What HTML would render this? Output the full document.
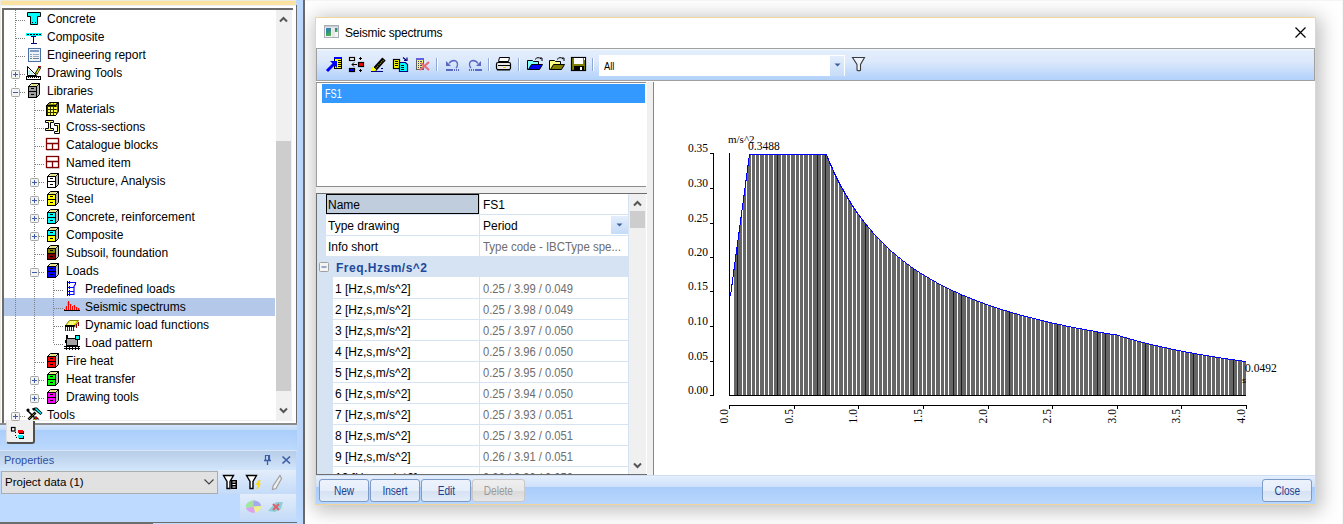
<!DOCTYPE html><html><head><meta charset="utf-8"><style>
html,body{margin:0;padding:0;}
body{width:1343px;height:524px;overflow:hidden;position:relative;background:#fff;font-family:"Liberation Sans",sans-serif;font-size:12px;color:#000;}
div{box-sizing:border-box;}
svg{position:absolute;overflow:visible;}
</style></head><body>
<div style="position:absolute;left:0px;top:0px;width:303px;height:524px;background:#bfdaff"></div>
<div style="position:absolute;left:0px;top:425px;width:297px;height:5px;background:linear-gradient(#d3e5fb,#c3dbfa)"></div>
<div style="position:absolute;left:0px;top:430px;width:297px;height:20px;background:linear-gradient(#aacefb,#bdd9fd)"></div>
<div style="position:absolute;left:0px;top:450px;width:297px;height:1px;background:#d9e7f6"></div>
<div style="position:absolute;left:0px;top:0px;width:296px;height:1px;background:#efe9da"></div>
<div style="position:absolute;left:1px;top:1px;width:295px;height:4px;background:#fce2a0"></div>
<div style="position:absolute;left:0px;top:5px;width:297px;height:420px;background:#fff"></div>
<div style="position:absolute;left:0px;top:0px;width:1px;height:422px;background:#efece6"></div>
<div style="position:absolute;left:0px;top:5px;width:296px;height:1px;background:#eef0f4"></div>
<div style="position:absolute;left:2px;top:8px;width:291px;height:2px;background:#6c6c6c"></div>
<div style="position:absolute;left:2px;top:8px;width:2px;height:416px;background:#6c6c6c"></div>
<div style="position:absolute;left:296px;top:5px;width:1px;height:420px;background:#6c6c6c"></div>
<div style="position:absolute;left:0px;top:423px;width:297px;height:2px;background:#8c8c8c"></div>
<div style="position:absolute;left:4px;top:420px;width:289px;height:1px;background:#eeeeee"></div>
<div style="position:absolute;left:276px;top:10px;width:16px;height:410px;background:#f0f0f0"></div>
<div style="position:absolute;left:276px;top:141px;width:15px;height:250px;background:#cdcdcd"></div>
<svg style="left:279px;top:16px" width="9" height="7"><path d="M1 5.5 L4.5 2 L8 5.5" fill="none" stroke="#555" stroke-width="2"/></svg>
<svg style="left:279px;top:407px" width="9" height="7"><path d="M1 1.5 L4.5 5 L8 1.5" fill="none" stroke="#555" stroke-width="2"/></svg>
<div style="position:absolute;left:303px;top:0px;width:2px;height:524px;background:#6b6b6b"></div>
<div style="position:absolute;left:0px;top:522px;width:297px;height:1px;background:#6d6d6d"></div>
<div style="position:absolute;left:0px;top:523px;width:153px;height:1px;background:#6d6d6d"></div>
<div style="position:absolute;left:4px;top:10px;width:272px;height:410px;overflow:hidden">
<div style="position:absolute;left:0px;top:288px;width:271px;height:18px;background:#b4c9e9"></div>
<div style="position:absolute;left:43px;top:0px;height:18px;line-height:18px;white-space:nowrap;">Concrete</div>
<svg style="left:22px;top:1px" width="16" height="16"><path d="M1.5 1.5H14.5V5.5H11.5V13.5H4.5V5.5H1.5Z" fill="#00ffff" stroke="#000"/><rect x="6" y="11" width="1" height="1" fill="#000"/><rect x="9" y="11" width="1" height="1" fill="#000"/></svg>
<div style="position:absolute;left:43px;top:18px;height:18px;line-height:18px;white-space:nowrap;">Composite</div>
<svg style="left:22px;top:19px" width="16" height="16"><rect x="0" y="4" width="16" height="3" fill="#00ffff"/><path d="M1 5.5h14" stroke="#000" stroke-dasharray="2 1"/><rect x="5" y="7" width="5" height="1" fill="#000080"/><rect x="7" y="8" width="1" height="6" fill="#000080"/><rect x="5" y="14" width="6" height="1" fill="#000080"/></svg>
<div style="position:absolute;left:43px;top:36px;height:18px;line-height:18px;white-space:nowrap;">Engineering report</div>
<svg style="left:22px;top:37px" width="16" height="16"><rect x="2.5" y="1.5" width="12" height="13" fill="#eef2f9" stroke="#4a6fa5"/><rect x="4" y="3" width="9" height="2" fill="#7f9cc8"/><rect x="4" y="7" width="2" height="1" fill="#8a9ab0"/><rect x="7" y="7" width="6" height="1" fill="#9aa8bc"/><rect x="4" y="9" width="2" height="1" fill="#8a9ab0"/><rect x="7" y="9" width="6" height="1" fill="#9aa8bc"/><rect x="4" y="11" width="2" height="1" fill="#707f96"/><rect x="7" y="11" width="6" height="1" fill="#707f96"/></svg>
<div style="position:absolute;left:43px;top:54px;height:18px;line-height:18px;white-space:nowrap;">Drawing Tools</div>
<svg style="left:22px;top:55px" width="16" height="16"><path d="M1.5 1.5V10.5H10.5Z" fill="#fff" stroke="#000"/><path d="M3 5.5V9H6.5Z" fill="none" stroke="#00e0e0" stroke-dasharray="1 1"/><rect x="0.5" y="11.5" width="14" height="3" fill="#fff" stroke="#000"/><path d="M2 12.5h1M4 12.5h1M6 12.5h1M8 12.5h1M10 12.5h1M12 12.5h1" stroke="#000"/><path d="M10 9L14 2" stroke="#000" stroke-width="2.6"/><path d="M10.5 8.5L13.5 3" stroke="#ffff00" stroke-width="1.2"/><rect x="12" y="1" width="3" height="1" fill="#c00000"/></svg>
<div style="position:absolute;left:43px;top:72px;height:18px;line-height:18px;white-space:nowrap;">Libraries</div>
<svg style="left:22px;top:73px" width="16" height="16"><path d="M10.5 3.5L13.5 0.5V11.5L10.5 14.5Z" fill="#b8b8b8" stroke="#000"/><path d="M2.5 3.5L5.5 0.5H13.5L10.5 3.5Z" fill="#f8f8e0" stroke="#000"/><path d="M5 2.5l1-1 1 1 1-1 1 1 1-1 1 1" stroke="#c8c000" fill="none" stroke-width="0.9"/><rect x="2.5" y="3.5" width="8" height="5" fill="#a0a0a0" stroke="#000"/><rect x="2.5" y="8.5" width="8" height="6" fill="#a0a0a0" stroke="#000"/><rect x="5" y="5" width="3" height="1" fill="#000"/><rect x="5" y="11" width="3" height="1" fill="#000"/></svg>
<div style="position:absolute;left:62px;top:90px;height:18px;line-height:18px;white-space:nowrap;">Materials</div>
<svg style="left:41px;top:91px" width="16" height="16"><path d="M10.5 4.5L13.5 1.5V10.5L10.5 14.5Z" fill="#606000" stroke="#000"/><path d="M1.5 4.5L4.5 1.5H13.5L10.5 4.5Z" fill="#808000" stroke="#000"/><rect x="1.5" y="4.5" width="9" height="10" fill="#303000" stroke="#000"/><rect x="3" y="6" width="2" height="2" fill="#ffff40"/><rect x="6" y="6" width="2" height="2" fill="#ffff40"/><rect x="9" y="6" width="2" height="2" fill="#ffff40"/><rect x="3" y="9" width="2" height="2" fill="#ffff40"/><rect x="6" y="9" width="2" height="2" fill="#ffff40"/><rect x="9" y="9" width="2" height="2" fill="#ffff40"/><rect x="3" y="12" width="2" height="2" fill="#ffff40"/><rect x="6" y="12" width="2" height="2" fill="#ffff40"/><rect x="9" y="12" width="2" height="2" fill="#ffff40"/><rect x="6" y="2" width="2" height="1" fill="#ffff40"/><rect x="9" y="2" width="2" height="1" fill="#ffff40"/><rect x="11" y="6" width="1" height="2" fill="#ffff40"/><rect x="11" y="9" width="1" height="2" fill="#ffff40"/></svg>
<div style="position:absolute;left:62px;top:108px;height:18px;line-height:18px;white-space:nowrap;">Cross-sections</div>
<svg style="left:41px;top:109px" width="16" height="16"><path d="M0.5 1.5H8.5V3.5H5.5V9.5H8.5V11.5H0.5V9.5H3.5V3.5H0.5Z" fill="#fff" stroke="#000"/><rect x="2" y="2" width="5" height="1" fill="#ffff60"/><rect x="4" y="4" width="1" height="5" fill="#ffff60"/><rect x="2" y="10" width="5" height="1" fill="#ffff60"/><path d="M9.5 4.5H14.5V14.5H9.5V12.5H12.5V6.5H9.5Z" fill="#fff" stroke="#000"/><rect x="13" y="6" width="1" height="7" fill="#ffff60"/></svg>
<div style="position:absolute;left:62px;top:126px;height:18px;line-height:18px;white-space:nowrap;">Catalogue blocks</div>
<svg style="left:41px;top:127px" width="16" height="16"><rect x="2" y="2" width="13" height="12" fill="#c8c8c8" opacity="0.6"/><rect x="1.5" y="1.5" width="12" height="11" fill="#fff" stroke="#800000" stroke-width="1.3"/><path d="M1.5 6.5h12M7.5 6.5v6" stroke="#800000" stroke-width="1.3"/></svg>
<div style="position:absolute;left:62px;top:144px;height:18px;line-height:18px;white-space:nowrap;">Named item</div>
<svg style="left:41px;top:145px" width="16" height="16"><rect x="2" y="2" width="13" height="12" fill="#c8c8c8" opacity="0.6"/><rect x="1.5" y="1.5" width="12" height="11" fill="#fff" stroke="#800000" stroke-width="1.3"/><path d="M1.5 6.5h12M7.5 6.5v6" stroke="#800000" stroke-width="1.3"/></svg>
<div style="position:absolute;left:62px;top:162px;height:18px;line-height:18px;white-space:nowrap;">Structure, Analysis</div>
<svg style="left:41px;top:163px" width="16" height="16"><path d="M10.5 3.5L13.5 0.5V11.5L10.5 14.5Z" fill="#b8b8b8" stroke="#000"/><path d="M2.5 3.5L5.5 0.5H13.5L10.5 3.5Z" fill="#f8f8e0" stroke="#000"/><path d="M5 2.5l1-1 1 1 1-1 1 1 1-1 1 1" stroke="#c8c000" fill="none" stroke-width="0.9"/><rect x="2.5" y="3.5" width="8" height="5" fill="#ffffff" stroke="#000"/><rect x="2.5" y="8.5" width="8" height="6" fill="#ffffff" stroke="#000"/><rect x="5" y="5" width="3" height="1" fill="#000"/><rect x="5" y="11" width="3" height="1" fill="#000"/></svg>
<div style="position:absolute;left:62px;top:180px;height:18px;line-height:18px;white-space:nowrap;">Steel</div>
<svg style="left:41px;top:181px" width="16" height="16"><path d="M10.5 3.5L13.5 0.5V11.5L10.5 14.5Z" fill="#b8b8b8" stroke="#000"/><path d="M2.5 3.5L5.5 0.5H13.5L10.5 3.5Z" fill="#f8f8e0" stroke="#000"/><path d="M5 2.5l1-1 1 1 1-1 1 1 1-1 1 1" stroke="#c8c000" fill="none" stroke-width="0.9"/><rect x="2.5" y="3.5" width="8" height="5" fill="#ffff00" stroke="#000"/><rect x="2.5" y="8.5" width="8" height="6" fill="#ffff00" stroke="#000"/><rect x="5" y="5" width="3" height="1" fill="#000"/><rect x="5" y="11" width="3" height="1" fill="#000"/></svg>
<div style="position:absolute;left:62px;top:198px;height:18px;line-height:18px;white-space:nowrap;">Concrete, reinforcement</div>
<svg style="left:41px;top:199px" width="16" height="16"><path d="M10.5 3.5L13.5 0.5V11.5L10.5 14.5Z" fill="#b8b8b8" stroke="#000"/><path d="M2.5 3.5L5.5 0.5H13.5L10.5 3.5Z" fill="#f8f8e0" stroke="#000"/><path d="M5 2.5l1-1 1 1 1-1 1 1 1-1 1 1" stroke="#c8c000" fill="none" stroke-width="0.9"/><rect x="2.5" y="3.5" width="8" height="5" fill="#00ffff" stroke="#000"/><rect x="2.5" y="8.5" width="8" height="6" fill="#00ffff" stroke="#000"/><rect x="5" y="5" width="3" height="1" fill="#000"/><rect x="5" y="11" width="3" height="1" fill="#000"/></svg>
<div style="position:absolute;left:62px;top:216px;height:18px;line-height:18px;white-space:nowrap;">Composite</div>
<svg style="left:41px;top:217px" width="16" height="16"><path d="M10.5 3.5L13.5 0.5V11.5L10.5 14.5Z" fill="#b8b8b8" stroke="#000"/><path d="M2.5 3.5L5.5 0.5H13.5L10.5 3.5Z" fill="#f8f8e0" stroke="#000"/><path d="M5 2.5l1-1 1 1 1-1 1 1 1-1 1 1" stroke="#c8c000" fill="none" stroke-width="0.9"/><rect x="2.5" y="3.5" width="8" height="5" fill="#00ffff" stroke="#000"/><rect x="2.5" y="8.5" width="8" height="6" fill="#ffff00" stroke="#000"/><rect x="5" y="5" width="3" height="1" fill="#000"/><rect x="5" y="11" width="3" height="1" fill="#000"/></svg>
<div style="position:absolute;left:62px;top:234px;height:18px;line-height:18px;white-space:nowrap;">Subsoil, foundation</div>
<svg style="left:41px;top:235px" width="16" height="16"><path d="M10.5 3.5L13.5 0.5V11.5L10.5 14.5Z" fill="#b8b8b8" stroke="#000"/><path d="M2.5 3.5L5.5 0.5H13.5L10.5 3.5Z" fill="#f8f8e0" stroke="#000"/><path d="M5 2.5l1-1 1 1 1-1 1 1 1-1 1 1" stroke="#c8c000" fill="none" stroke-width="0.9"/><rect x="2.5" y="3.5" width="8" height="5" fill="#808000" stroke="#000"/><rect x="2.5" y="8.5" width="8" height="6" fill="#800000" stroke="#000"/><rect x="5" y="5" width="3" height="1" fill="#000"/><rect x="5" y="11" width="3" height="1" fill="#000"/></svg>
<div style="position:absolute;left:62px;top:252px;height:18px;line-height:18px;white-space:nowrap;">Loads</div>
<svg style="left:41px;top:253px" width="16" height="16"><path d="M10.5 3.5L13.5 0.5V11.5L10.5 14.5Z" fill="#b8b8b8" stroke="#000"/><path d="M2.5 3.5L5.5 0.5H13.5L10.5 3.5Z" fill="#f8f8e0" stroke="#000"/><path d="M5 2.5l1-1 1 1 1-1 1 1 1-1 1 1" stroke="#c8c000" fill="none" stroke-width="0.9"/><rect x="2.5" y="3.5" width="8" height="5" fill="#0000ff" stroke="#000"/><rect x="2.5" y="8.5" width="8" height="6" fill="#0000ff" stroke="#000"/><rect x="5" y="5" width="3" height="1" fill="#000"/><rect x="5" y="11" width="3" height="1" fill="#000"/></svg>
<div style="position:absolute;left:81px;top:270px;height:18px;line-height:18px;white-space:nowrap;">Predefined loads</div>
<svg style="left:60px;top:271px" width="16" height="16"><rect x="3" y="0" width="1" height="15" fill="#000"/><path d="M4 1.5H11.5V3L10 5.5V13.5H4M4 6.5H10M4 10.5H10" fill="none" stroke="#0000ff" stroke-width="1.1"/><rect x="5" y="0" width="1" height="3" fill="#0000ff"/><rect x="5" y="5" width="1" height="3" fill="#0000ff"/><rect x="5" y="9" width="1" height="3" fill="#0000ff"/><rect x="5" y="12" width="1" height="3" fill="#0000ff"/></svg>
<div style="position:absolute;left:81px;top:288px;height:18px;line-height:18px;white-space:nowrap;">Seismic spectrums</div>
<svg style="left:60px;top:289px" width="16" height="16"><rect x="0" y="11" width="16" height="1" fill="#000"/><rect x="0" y="10" width="1" height="1" fill="#ff0000"/><rect x="2" y="7" width="1" height="4" fill="#ff0000"/><rect x="4" y="2" width="1" height="9" fill="#ff0000"/><rect x="6" y="5" width="1" height="6" fill="#ff0000"/><rect x="8" y="7" width="1" height="4" fill="#ff0000"/><rect x="10" y="6" width="1" height="5" fill="#ff0000"/><rect x="12" y="8" width="1" height="3" fill="#ff0000"/><rect x="14" y="9" width="1" height="2" fill="#ff0000"/><rect x="1" y="8" width="1" height="2" fill="#00f0f0"/><rect x="3" y="3" width="1" height="4" fill="#00f0f0"/><rect x="5" y="3" width="1" height="3" fill="#00f0f0"/><rect x="7" y="5" width="1" height="2" fill="#00f0f0"/><rect x="9" y="6" width="1" height="2" fill="#00f0f0"/><rect x="11" y="7" width="1" height="2" fill="#00f0f0"/><rect x="13" y="8" width="1" height="2" fill="#00f0f0"/><rect x="15" y="9" width="1" height="2" fill="#00f0f0"/></svg>
<div style="position:absolute;left:81px;top:306px;height:18px;line-height:18px;white-space:nowrap;">Dynamic load functions</div>
<svg style="left:60px;top:307px" width="16" height="16"><path d="M1.5 8.5L5.5 3.5H14.5L10.5 8.5Z" fill="#ffff00" stroke="#808000"/><path d="M4 7h5M6 5h6" stroke="#fff" stroke-dasharray="1 1"/><rect x="1" y="8" width="10" height="2" fill="#000"/><path d="M10.5 9.5L14.5 4.5V6L10.5 11Z" fill="#808080"/><rect x="1" y="10" width="1" height="4" fill="#900000"/><rect x="2" y="13" width="1" height="1" fill="#c0c0c0"/><rect x="3" y="10" width="1" height="4" fill="#900000"/><rect x="4" y="13" width="1" height="1" fill="#c0c0c0"/><rect x="5" y="10" width="1" height="4" fill="#900000"/><rect x="6" y="13" width="1" height="1" fill="#c0c0c0"/><rect x="7" y="10" width="1" height="4" fill="#900000"/><rect x="8" y="13" width="1" height="1" fill="#c0c0c0"/><rect x="9" y="10" width="1" height="4" fill="#900000"/><rect x="10" y="13" width="1" height="1" fill="#c0c0c0"/><rect x="12" y="7" width="1" height="4" fill="#900000"/><rect x="14" y="5" width="1" height="4" fill="#900000"/></svg>
<div style="position:absolute;left:81px;top:324px;height:18px;line-height:18px;white-space:nowrap;">Load pattern</div>
<svg style="left:60px;top:325px" width="16" height="16"><rect x="2" y="0" width="2" height="5" fill="#000"/><rect x="2.5" y="3.5" width="11" height="7" fill="#a4a4a4" stroke="#000"/><rect x="11.5" y="0.5" width="4" height="4" fill="#00ffff" stroke="#000"/><rect x="1" y="5" width="1" height="3" fill="#000"/><rect x="0" y="11" width="16" height="1" fill="#000"/><rect x="0" y="13" width="16" height="1" fill="#000"/><rect x="2" y="11" width="1" height="4" fill="#000"/><rect x="5" y="11" width="1" height="4" fill="#000"/><rect x="8" y="11" width="1" height="4" fill="#000"/><rect x="11" y="11" width="1" height="4" fill="#000"/><rect x="14" y="11" width="1" height="4" fill="#000"/></svg>
<div style="position:absolute;left:62px;top:342px;height:18px;line-height:18px;white-space:nowrap;">Fire heat</div>
<svg style="left:41px;top:343px" width="16" height="16"><path d="M10.5 3.5L13.5 0.5V11.5L10.5 14.5Z" fill="#b8b8b8" stroke="#000"/><path d="M2.5 3.5L5.5 0.5H13.5L10.5 3.5Z" fill="#f8f8e0" stroke="#000"/><path d="M5 2.5l1-1 1 1 1-1 1 1 1-1 1 1" stroke="#c8c000" fill="none" stroke-width="0.9"/><rect x="2.5" y="3.5" width="8" height="5" fill="#ff0000" stroke="#000"/><rect x="2.5" y="8.5" width="8" height="6" fill="#ff0000" stroke="#000"/><rect x="5" y="5" width="3" height="1" fill="#000"/><rect x="5" y="11" width="3" height="1" fill="#000"/></svg>
<div style="position:absolute;left:62px;top:360px;height:18px;line-height:18px;white-space:nowrap;">Heat transfer</div>
<svg style="left:41px;top:361px" width="16" height="16"><path d="M10.5 3.5L13.5 0.5V11.5L10.5 14.5Z" fill="#b8b8b8" stroke="#000"/><path d="M2.5 3.5L5.5 0.5H13.5L10.5 3.5Z" fill="#f8f8e0" stroke="#000"/><path d="M5 2.5l1-1 1 1 1-1 1 1 1-1 1 1" stroke="#c8c000" fill="none" stroke-width="0.9"/><rect x="2.5" y="3.5" width="8" height="5" fill="#00ff00" stroke="#000"/><rect x="2.5" y="8.5" width="8" height="6" fill="#00ff00" stroke="#000"/><rect x="5" y="5" width="3" height="1" fill="#000"/><rect x="5" y="11" width="3" height="1" fill="#000"/></svg>
<div style="position:absolute;left:62px;top:378px;height:18px;line-height:18px;white-space:nowrap;">Drawing tools</div>
<svg style="left:41px;top:379px" width="16" height="16"><path d="M10.5 3.5L13.5 0.5V11.5L10.5 14.5Z" fill="#b8b8b8" stroke="#000"/><path d="M2.5 3.5L5.5 0.5H13.5L10.5 3.5Z" fill="#f8f8e0" stroke="#000"/><path d="M5 2.5l1-1 1 1 1-1 1 1 1-1 1 1" stroke="#c8c000" fill="none" stroke-width="0.9"/><rect x="2.5" y="3.5" width="8" height="5" fill="#ff00ff" stroke="#000"/><rect x="2.5" y="8.5" width="8" height="6" fill="#ff00ff" stroke="#000"/><rect x="5" y="5" width="3" height="1" fill="#000"/><rect x="5" y="11" width="3" height="1" fill="#000"/></svg>
<div style="position:absolute;left:43px;top:396px;height:18px;line-height:18px;white-space:nowrap;">Tools</div>
<svg style="left:22px;top:397px" width="16" height="16"><path d="M1.5 3.5L8.5 10.5" stroke="#000" stroke-width="1.6"/><circle cx="2" cy="3" r="1.6" fill="#000"/><path d="M6.5 12.5L10 9L13.5 12.5Z" fill="#000"/><rect x="9" y="10" width="2" height="2" fill="#d00000"/><rect x="8" y="12" width="1" height="1" fill="#d0c000"/><rect x="11" y="12" width="1" height="1" fill="#d0c000"/><path d="M2.5 12.5L9.5 5.5" stroke="#000" stroke-width="2.6"/><path d="M3 12L9 6" stroke="#d8c800" stroke-width="1" stroke-dasharray="1 1"/><path d="M6 1.5L9 0.5H11L16.5 6L14.5 8L9 3.5H7Z" fill="#000"/><path d="M9.5 1.5L15 6.5" stroke="#00ffff" stroke-width="1.4"/></svg>
</div>
<div style="position:absolute;left:15px;top:10px;width:1px;height:406px;background:repeating-linear-gradient(to bottom,#808080 0 1px,transparent 1px 2px)"></div>
<div style="position:absolute;left:16px;top:20px;width:10px;height:1px;background:repeating-linear-gradient(to right,#808080 0 1px,transparent 1px 2px)"></div>
<div style="position:absolute;left:16px;top:38px;width:10px;height:1px;background:repeating-linear-gradient(to right,#808080 0 1px,transparent 1px 2px)"></div>
<div style="position:absolute;left:16px;top:56px;width:10px;height:1px;background:repeating-linear-gradient(to right,#808080 0 1px,transparent 1px 2px)"></div>
<div style="position:absolute;left:20px;top:74px;width:6px;height:1px;background:repeating-linear-gradient(to right,#808080 0 1px,transparent 1px 2px)"></div>
<div style="position:absolute;left:20px;top:92px;width:6px;height:1px;background:repeating-linear-gradient(to right,#808080 0 1px,transparent 1px 2px)"></div>
<div style="position:absolute;left:35px;top:110px;width:10px;height:1px;background:repeating-linear-gradient(to right,#808080 0 1px,transparent 1px 2px)"></div>
<div style="position:absolute;left:35px;top:128px;width:10px;height:1px;background:repeating-linear-gradient(to right,#808080 0 1px,transparent 1px 2px)"></div>
<div style="position:absolute;left:35px;top:146px;width:10px;height:1px;background:repeating-linear-gradient(to right,#808080 0 1px,transparent 1px 2px)"></div>
<div style="position:absolute;left:35px;top:164px;width:10px;height:1px;background:repeating-linear-gradient(to right,#808080 0 1px,transparent 1px 2px)"></div>
<div style="position:absolute;left:39px;top:182px;width:6px;height:1px;background:repeating-linear-gradient(to right,#808080 0 1px,transparent 1px 2px)"></div>
<div style="position:absolute;left:39px;top:200px;width:6px;height:1px;background:repeating-linear-gradient(to right,#808080 0 1px,transparent 1px 2px)"></div>
<div style="position:absolute;left:39px;top:218px;width:6px;height:1px;background:repeating-linear-gradient(to right,#808080 0 1px,transparent 1px 2px)"></div>
<div style="position:absolute;left:39px;top:236px;width:6px;height:1px;background:repeating-linear-gradient(to right,#808080 0 1px,transparent 1px 2px)"></div>
<div style="position:absolute;left:35px;top:254px;width:10px;height:1px;background:repeating-linear-gradient(to right,#808080 0 1px,transparent 1px 2px)"></div>
<div style="position:absolute;left:39px;top:272px;width:6px;height:1px;background:repeating-linear-gradient(to right,#808080 0 1px,transparent 1px 2px)"></div>
<div style="position:absolute;left:54px;top:290px;width:10px;height:1px;background:repeating-linear-gradient(to right,#808080 0 1px,transparent 1px 2px)"></div>
<div style="position:absolute;left:54px;top:308px;width:10px;height:1px;background:repeating-linear-gradient(to right,#808080 0 1px,transparent 1px 2px)"></div>
<div style="position:absolute;left:54px;top:326px;width:10px;height:1px;background:repeating-linear-gradient(to right,#808080 0 1px,transparent 1px 2px)"></div>
<div style="position:absolute;left:54px;top:344px;width:10px;height:1px;background:repeating-linear-gradient(to right,#808080 0 1px,transparent 1px 2px)"></div>
<div style="position:absolute;left:35px;top:362px;width:10px;height:1px;background:repeating-linear-gradient(to right,#808080 0 1px,transparent 1px 2px)"></div>
<div style="position:absolute;left:39px;top:380px;width:6px;height:1px;background:repeating-linear-gradient(to right,#808080 0 1px,transparent 1px 2px)"></div>
<div style="position:absolute;left:39px;top:398px;width:6px;height:1px;background:repeating-linear-gradient(to right,#808080 0 1px,transparent 1px 2px)"></div>
<div style="position:absolute;left:20px;top:416px;width:6px;height:1px;background:repeating-linear-gradient(to right,#808080 0 1px,transparent 1px 2px)"></div>
<div style="position:absolute;left:34px;top:100px;width:1px;height:298px;background:repeating-linear-gradient(to bottom,#808080 0 1px,transparent 1px 2px)"></div>
<div style="position:absolute;left:53px;top:280px;width:1px;height:64px;background:repeating-linear-gradient(to bottom,#808080 0 1px,transparent 1px 2px)"></div>
<svg style="left:11px;top:70px" width="9" height="9"><rect x="0.5" y="0.5" width="8" height="8" rx="1" fill="#f4f4f4" stroke="#a5a5a5"/><path d="M2 4.5h5" stroke="#3d5ca5" stroke-width="1"/><path d="M4.5 2v5" stroke="#3d5ca5"/></svg>
<svg style="left:11px;top:88px" width="9" height="9"><rect x="0.5" y="0.5" width="8" height="8" rx="1" fill="#f4f4f4" stroke="#a5a5a5"/><path d="M2 4.5h5" stroke="#3d5ca5" stroke-width="1"/></svg>
<svg style="left:30px;top:178px" width="9" height="9"><rect x="0.5" y="0.5" width="8" height="8" rx="1" fill="#f4f4f4" stroke="#a5a5a5"/><path d="M2 4.5h5" stroke="#3d5ca5" stroke-width="1"/><path d="M4.5 2v5" stroke="#3d5ca5"/></svg>
<svg style="left:30px;top:196px" width="9" height="9"><rect x="0.5" y="0.5" width="8" height="8" rx="1" fill="#f4f4f4" stroke="#a5a5a5"/><path d="M2 4.5h5" stroke="#3d5ca5" stroke-width="1"/><path d="M4.5 2v5" stroke="#3d5ca5"/></svg>
<svg style="left:30px;top:214px" width="9" height="9"><rect x="0.5" y="0.5" width="8" height="8" rx="1" fill="#f4f4f4" stroke="#a5a5a5"/><path d="M2 4.5h5" stroke="#3d5ca5" stroke-width="1"/><path d="M4.5 2v5" stroke="#3d5ca5"/></svg>
<svg style="left:30px;top:232px" width="9" height="9"><rect x="0.5" y="0.5" width="8" height="8" rx="1" fill="#f4f4f4" stroke="#a5a5a5"/><path d="M2 4.5h5" stroke="#3d5ca5" stroke-width="1"/><path d="M4.5 2v5" stroke="#3d5ca5"/></svg>
<svg style="left:30px;top:268px" width="9" height="9"><rect x="0.5" y="0.5" width="8" height="8" rx="1" fill="#f4f4f4" stroke="#a5a5a5"/><path d="M2 4.5h5" stroke="#3d5ca5" stroke-width="1"/></svg>
<svg style="left:30px;top:376px" width="9" height="9"><rect x="0.5" y="0.5" width="8" height="8" rx="1" fill="#f4f4f4" stroke="#a5a5a5"/><path d="M2 4.5h5" stroke="#3d5ca5" stroke-width="1"/><path d="M4.5 2v5" stroke="#3d5ca5"/></svg>
<svg style="left:30px;top:394px" width="9" height="9"><rect x="0.5" y="0.5" width="8" height="8" rx="1" fill="#f4f4f4" stroke="#a5a5a5"/><path d="M2 4.5h5" stroke="#3d5ca5" stroke-width="1"/><path d="M4.5 2v5" stroke="#3d5ca5"/></svg>
<svg style="left:11px;top:412px" width="9" height="9"><rect x="0.5" y="0.5" width="8" height="8" rx="1" fill="#f4f4f4" stroke="#a5a5a5"/><path d="M2 4.5h5" stroke="#3d5ca5" stroke-width="1"/><path d="M4.5 2v5" stroke="#3d5ca5"/></svg>
<div style="position:absolute;left:6px;top:421px;width:29px;height:23px;background:#f0f0f0;border-right:2px solid #505050;border-bottom:2px solid #505050;border-left:1px solid #e0e0e0;border-radius:0 0 3px 3px"></div>
<svg style="left:10px;top:426px" width="16" height="14"><rect x="1.5" y="1.5" width="3.5" height="3.5" fill="#fff" stroke="#000" stroke-width="1.2"/><rect x="8" y="4" width="5" height="3" fill="#ff0000"/><rect x="9" y="7" width="5" height="1" fill="#000"/><rect x="13" y="5" width="1" height="3" fill="#000"/><rect x="8" y="9" width="5" height="3" fill="#00f0f0"/><rect x="9" y="12" width="5" height="1" fill="#000"/><rect x="13" y="10" width="1" height="3" fill="#000"/><rect x="5" y="6" width="1" height="1" fill="#000"/><rect x="5" y="9" width="1" height="1" fill="#000"/><rect x="6" y="11" width="1" height="1" fill="#000"/></svg>
<div style="position:absolute;left:0px;top:451px;width:296px;height:20px;background:linear-gradient(#b7cde8,#d3e7fc)"></div>
<div style="position:absolute;left:4px;top:450px;height:20px;line-height:20px;white-space:nowrap;color:#2f4f9f;font-size:11px">Properties</div>
<svg style="left:264px;top:455px" width="9" height="10"><path d="M1.5 0.5h4v5h-4z" fill="none" stroke="#3c5ea8" stroke-width="1.2"/><rect x="4" y="0" width="2" height="6" fill="#3c5ea8"/><path d="M0 5.5h7M3.5 6v4" stroke="#3c5ea8" stroke-width="1.3"/></svg>
<svg style="left:282px;top:456px" width="9" height="9"><path d="M0.5 0.5L8 7.5M8 0.5L0.5 7.5" stroke="#3c5ea8" stroke-width="1.7"/></svg>
<div style="position:absolute;left:1px;top:471px;width:217px;height:23px;background:#e1e1e1;border:1px solid #adadad"></div>
<div style="position:absolute;left:5px;top:472px;height:21px;line-height:21px;white-space:nowrap;font-size:11.5px">Project data (1)</div>
<svg style="left:204px;top:479px" width="10" height="6"><path d="M0.5 0.5l4.5 4.5 4.5-4.5" fill="none" stroke="#404040" stroke-width="1.1"/></svg>
<div style="position:absolute;left:218px;top:470px;width:78px;height:24px;background:linear-gradient(#e3edfb,#c4dbf8)"></div>
<div style="position:absolute;left:240px;top:494px;width:56px;height:26px;background:linear-gradient(#e3edfb,#c4dbf8)"></div>
<svg style="left:223px;top:475px" width="16" height="15"><path d="M0.5 0.5h10l-3.5 6v7h-3v-7z" fill="#fff" stroke="#000" stroke-width="1.4"/><rect x="8" y="5" width="6" height="9" fill="#000"/><path d="M9.5 7h3M9.5 9.5h3M9.5 12h3" stroke="#fff"/></svg>
<svg style="left:246px;top:475px" width="17" height="15"><path d="M0.5 0.5h10l-3.5 6v7h-3v-7z" fill="#fff" stroke="#000" stroke-width="1.4"/><path d="M14 5l-3 4h2.5l-2.5 5" fill="none" stroke="#ffd800" stroke-width="1.6"/></svg>
<svg style="left:272px;top:475px" width="10" height="15"><path d="M8 0.5l1.5 3-5.5 10-3.5 1 0.5-3.5z" fill="#f0f0f0" stroke="#a0a0a0" stroke-width="1.2"/></svg>
<svg style="left:245px;top:500px" width="17" height="13"><ellipse cx="8.5" cy="6.5" rx="7.5" ry="6" fill="#a8e0a8"/><path d="M8.5 6.5L8.5 0.5A7.5 6 0 0 1 16 6z" fill="#a8a8f0"/><path d="M8.5 6.5L16 6A7.5 6 0 0 1 10 12.5z" fill="#f0f090"/><path d="M8.5 6.5L10 12.5A7.5 6 0 0 1 1 8z" fill="#e0a0f0"/><path d="M8.5 6.5L1 8A7.5 6 0 0 1 4 2z" fill="#a0e8a0"/></svg>
<svg style="left:267px;top:500px" width="17" height="13"><path d="M1 11l8-9h7l-2 7-6 3z" fill="#8ed0d8"/><path d="M6 4l6 6M12 4l-6 6" stroke="#e06070" stroke-width="2"/></svg>
<div style="position:absolute;left:315px;top:17px;width:1001px;height:488px;border:1px solid #f1d59c;background:#fff;box-shadow:2px 3px 18px 3px rgba(0,0,0,0.26)"></div>
<svg style="left:324px;top:25px" width="15" height="13"><defs><linearGradient id="tg" x1="0" y1="0" x2="0.4" y2="1"><stop offset="0" stop-color="#4a78c0"/><stop offset="0.5" stop-color="#2e8c8c"/><stop offset="1" stop-color="#4cb050"/></linearGradient></defs><rect x="0.5" y="0.5" width="14" height="12" fill="#f6f6f6" stroke="#a9adb5"/><rect x="1" y="1" width="13" height="1.5" fill="#c8ccd4"/><rect x="2" y="3" width="5" height="8" fill="url(#tg)"/><rect x="8" y="3" width="3" height="9" fill="#e6e6e6"/><rect x="11" y="3" width="2.5" height="4" fill="url(#tg)"/></svg>
<div style="position:absolute;left:345px;top:24px;height:18px;line-height:18px;white-space:nowrap;letter-spacing:-0.2px">Seismic spectrums</div>
<svg style="left:1295px;top:27px" width="11" height="11"><path d="M0.5 0.5l10 10M10.5 0.5l-10 10" stroke="#000" stroke-width="1.2"/></svg>
<div style="position:absolute;left:316px;top:48px;width:999px;height:33px;border:1px solid #a0a0a0;background:linear-gradient(#f5f9ff 0px,#e2edfc 2px,#dde9fc 12px,#b1d1fa 100%)"></div>
<div style="position:absolute;left:599px;top:55px;width:246px;height:21px;background:#fff"></div>
<div style="position:absolute;left:830px;top:56px;width:14px;height:20px;background:linear-gradient(#e3eefc,#c7dcf9)"></div>
<svg style="left:834px;top:63px" width="7" height="4"><path d="M0.5 0.5h6l-3 3z" fill="#3e5e9e"/></svg>
<div style="position:absolute;left:604px;top:56px;height:21px;line-height:21px;white-space:nowrap;font-size:11px;transform:scaleX(0.85);transform-origin:0 0">All</div>
<svg style="left:851px;top:56px" width="15" height="17"><path d="M1.5 1.5H13.5L9.5 8.5V14Q8 15.5 6 14V8.5Z" fill="#eef3fb" stroke="#3a3a3a" stroke-width="1.1"/></svg>
<svg style="left:0;top:0" width="1343" height="100"><rect x="334.5" y="58.5" width="7" height="10" fill="#ffff00" stroke="#000"/><rect x="334" y="57" width="8" height="2" fill="#0000ff"/><rect x="338" y="60" width="3" height="1" fill="#000"/><rect x="338" y="62" width="3" height="1" fill="#000"/><rect x="338" y="64" width="3" height="1" fill="#000"/><rect x="338" y="66" width="3" height="1" fill="#000"/><path d="M327 71L334 64" stroke="#0000ff" stroke-width="3"/><path d="M330 61H337V68Z" fill="#0000ff"/><rect x="349.5" y="57.5" width="5" height="3" fill="#fff" stroke="#000" stroke-width="1.2"/><rect x="349.5" y="68.5" width="5" height="3" fill="#0000ff" stroke="#000" stroke-width="1.2"/><rect x="358.5" y="62.5" width="5" height="4" fill="#ff0000" stroke="#000" stroke-width="1.2"/><path d="M352 64.5H357M354 62.5L352 64.5L354 66.5" stroke="#000" fill="none"/><rect x="360" y="57" width="1" height="3" fill="#000"/><rect x="359" y="58" width="3" height="1" fill="#000"/><rect x="360" y="69" width="1" height="3" fill="#000"/><rect x="359" y="70" width="3" height="1" fill="#000"/><path d="M374 70L384 59" stroke="#000" stroke-width="4.5"/><path d="M374.5 69.5L384 59.5" stroke="#a0a000" stroke-width="1.2" stroke-dasharray="1 1"/><path d="M372 71L373 67L376 70Z" fill="#ffff00" stroke="#ffff00"/><rect x="371" y="71" width="12" height="1" fill="#000080"/><rect x="381" y="68" width="2" height="1" fill="#000080"/><rect x="393.5" y="59.5" width="6" height="9" fill="#ffff00" stroke="#000" stroke-width="1.2"/><rect x="395" y="61" width="3" height="1" fill="#000"/><rect x="395" y="63" width="3" height="1" fill="#000"/><rect x="395" y="65" width="3" height="1" fill="#000"/><path d="M399.5 62.5H405.5L407.5 64.5V71.5H399.5Z" fill="#00ffff" stroke="#000080" stroke-width="1.2"/><rect x="401" y="65" width="3" height="1" fill="#000"/><rect x="401" y="67" width="3" height="1" fill="#000"/><rect x="401" y="69" width="3" height="1" fill="#000"/><path d="M403 57.5L406 60M404 60.5H407V57.5" stroke="#000080" fill="none" stroke-width="1.2"/><rect x="416.5" y="59.5" width="7" height="10" fill="#f0f080" stroke="#606060"/><rect x="416" y="58" width="8" height="2" fill="#6060e0"/><rect x="418" y="61" width="1" height="1" fill="#404060"/><rect x="420" y="61" width="2" height="1" fill="#404060"/><rect x="418" y="63" width="1" height="1" fill="#404060"/><rect x="420" y="63" width="2" height="1" fill="#404060"/><rect x="418" y="65" width="1" height="1" fill="#404060"/><rect x="420" y="65" width="2" height="1" fill="#404060"/><rect x="418" y="67" width="1" height="1" fill="#404060"/><rect x="420" y="67" width="2" height="1" fill="#404060"/><path d="M420 70L429 62M421 63L429 70" stroke="#e86878" stroke-width="2"/><rect x="436" y="58" width="1" height="13" fill="#8fa9d4"/><rect x="437" y="58" width="1" height="13" fill="#ffffff"/><rect x="488" y="58" width="1" height="13" fill="#8fa9d4"/><rect x="489" y="58" width="1" height="13" fill="#ffffff"/><rect x="518" y="58" width="1" height="13" fill="#8fa9d4"/><rect x="519" y="58" width="1" height="13" fill="#ffffff"/><rect x="592" y="58" width="1" height="13" fill="#8fa9d4"/><rect x="593" y="58" width="1" height="13" fill="#ffffff"/><path d="M446 61V66H451Z" fill="#5a68c0"/><path d="M449 63.5Q451 60.5 454 60.5Q457.5 61 457.5 64.5Q457.5 66.5 456 68" fill="none" stroke="#5a68c0" stroke-width="1.3"/><rect x="446" y="69" width="7" height="2" fill="#5a68c0"/><rect x="454" y="69" width="1" height="2" fill="#5a68c0"/><rect x="456" y="69" width="1" height="2" fill="#5a68c0"/><rect x="458" y="69" width="1" height="2" fill="#5a68c0"/><path d="M481 61V66H476Z" fill="#5a68c0"/><path d="M478 63.5Q476 60.5 473 60.5Q469.5 61 469.5 64.5Q469.5 66.5 471 68" fill="none" stroke="#5a68c0" stroke-width="1.3"/><rect x="475" y="69" width="7" height="2" fill="#5a68c0"/><rect x="473" y="69" width="1" height="2" fill="#5a68c0"/><rect x="471" y="69" width="1" height="2" fill="#5a68c0"/><rect x="469" y="69" width="1" height="2" fill="#5a68c0"/><path d="M499.5 57.5H509.5L508.5 61.5H498.5Z" fill="#fff" stroke="#000"/><rect x="496.5" y="62.5" width="14" height="7" rx="1.5" fill="#e8e8e8" stroke="#000" stroke-width="1.2"/><rect x="498" y="65" width="12" height="1" fill="#000"/><rect x="503" y="67" width="3" height="1" fill="#ffd000"/><rect x="497" y="69" width="13" height="1.5" fill="#000"/><path d="M527.5 60.5H532.5L533.5 61.5H538.5V69.5H527.5Z" fill="#80ffff" stroke="#000"/><path d="M528.5 69.5L531.5 64.5H542.5L539.5 69.5Z" fill="#0000ff" stroke="#000"/><path d="M535 59.5Q538 56 541 59" stroke="#000" fill="none"/><path d="M540 58H542V61" stroke="#000" fill="none"/><path d="M549.5 60.5H554.5L555.5 61.5H560.5V69.5H549.5Z" fill="#ffff80" stroke="#000"/><path d="M550.5 69.5L553.5 64.5H564.5L561.5 69.5Z" fill="#808000" stroke="#000"/><path d="M557 59.5Q560 56 563 59" stroke="#000" fill="none"/><path d="M562 58H564V61" stroke="#000" fill="none"/><rect x="571.5" y="57.5" width="14" height="13" fill="#808000" stroke="#000" stroke-width="1.2"/><rect x="574" y="58" width="9" height="6" fill="#fff"/><rect x="574" y="66" width="10" height="5" fill="#000"/><rect x="580" y="67" width="2" height="3" fill="#fff"/><rect x="584" y="58" width="1" height="2" fill="#fff"/></svg>
<div style="position:absolute;left:316px;top:82px;width:330px;height:105px;background:#fff;border-top:1px solid #8c8c8c;border-left:1px solid #a0a0a0;border-bottom:1px solid #8c8c8c"></div>
<div style="position:absolute;left:646px;top:82px;width:1px;height:393px;background:#fff"></div>
<div style="position:absolute;left:322px;top:84px;width:323px;height:19px;background:#3399ff"></div>
<div style="position:absolute;left:325px;top:85px;height:19px;line-height:19px;white-space:nowrap;color:#fff;transform:scaleX(0.76);transform-origin:0 0">FS1</div>
<div style="position:absolute;left:316px;top:187px;width:331px;height:6px;background:#f0f0f0"></div>
<div style="position:absolute;left:647px;top:82px;width:6px;height:393px;background:#f0f0f0"></div>
<div style="position:absolute;left:653px;top:82px;width:1px;height:393px;background:#858585"></div>
<div style="position:absolute;left:316px;top:193px;width:331px;height:282px;background:#fff;border-top:1px solid #6e6e6e;border-left:1px solid #6e6e6e;border-bottom:1px solid #6e6e6e"></div>
<div style="position:absolute;left:317px;top:194px;width:312px;height:280px;overflow:hidden">
<div style="position:absolute;left:0px;top:0px;width:9px;height:280px;background:#d5e3f3"></div>
<div style="position:absolute;left:0px;top:62px;width:312px;height:21px;background:#d5e3f3"></div>
<div style="position:absolute;left:0px;top:83px;width:16px;height:200px;background:#d5e3f3"></div>
<div style="position:absolute;left:9px;top:20px;width:303px;height:1px;background:#d6e3f3"></div>
<div style="position:absolute;left:9px;top:41px;width:303px;height:1px;background:#d6e3f3"></div>
<div style="position:absolute;left:16px;top:104px;width:303px;height:1px;background:#d6e3f3"></div>
<div style="position:absolute;left:16px;top:125px;width:303px;height:1px;background:#d6e3f3"></div>
<div style="position:absolute;left:16px;top:146px;width:303px;height:1px;background:#d6e3f3"></div>
<div style="position:absolute;left:16px;top:167px;width:303px;height:1px;background:#d6e3f3"></div>
<div style="position:absolute;left:16px;top:188px;width:303px;height:1px;background:#d6e3f3"></div>
<div style="position:absolute;left:16px;top:209px;width:303px;height:1px;background:#d6e3f3"></div>
<div style="position:absolute;left:16px;top:230px;width:303px;height:1px;background:#d6e3f3"></div>
<div style="position:absolute;left:16px;top:251px;width:303px;height:1px;background:#d6e3f3"></div>
<div style="position:absolute;left:16px;top:272px;width:303px;height:1px;background:#d6e3f3"></div>
<div style="position:absolute;left:162px;top:0px;width:1px;height:62px;background:#d6e3f3"></div>
<div style="position:absolute;left:162px;top:83px;width:1px;height:203px;background:#d6e3f3"></div>
<div style="position:absolute;left:311px;top:0px;width:1px;height:62px;background:#d6e3f3"></div>
<div style="position:absolute;left:311px;top:83px;width:1px;height:200px;background:#d6e3f3"></div>
<div style="position:absolute;left:9px;top:0px;width:153px;height:20px;background:#bfcddc;border:1px solid #000"></div>
<div style="position:absolute;left:11px;top:1px;height:21px;line-height:21px;white-space:nowrap;">Name</div>
<div style="position:absolute;left:166px;top:1px;height:21px;line-height:21px;white-space:nowrap;">FS1</div>
<div style="position:absolute;left:11px;top:22px;height:21px;line-height:21px;white-space:nowrap;">Type drawing</div>
<div style="position:absolute;left:166px;top:22px;height:21px;line-height:21px;white-space:nowrap;">Period</div>
<div style="position:absolute;left:294px;top:22px;width:17px;height:18px;background:linear-gradient(#e4eefc,#c4dbf8)"></div>
<svg style="left:299px;top:29px" width="7" height="4"><path d="M0.5 0.5h6l-3 3z" fill="#3e5e9e"/></svg>
<div style="position:absolute;left:11px;top:43px;height:21px;line-height:21px;white-space:nowrap;">Info short</div>
<div style="position:absolute;left:166px;top:43px;height:21px;line-height:21px;white-space:nowrap;color:#6d6d6d;transform:scaleX(0.953);transform-origin:0 0">Type code - IBCType spe...</div>
<svg style="left:2px;top:68px" width="10" height="10"><rect x="0.5" y="0.5" width="9" height="9" rx="1" fill="#f4f4f4" stroke="#a0a0a0"/><path d="M2.5 5h5" stroke="#3d5ca5"/></svg>
<div style="position:absolute;left:19px;top:64px;height:21px;line-height:21px;white-space:nowrap;font-weight:bold;color:#22489c;letter-spacing:0.5px">Freq.Hzsm/s^2</div>
<div style="position:absolute;left:18px;top:85px;height:21px;line-height:21px;white-space:nowrap;">1 [Hz,s,m/s^2]</div>
<div style="position:absolute;left:166px;top:85px;height:21px;line-height:21px;white-space:nowrap;color:#6d6d6d;transform:scaleX(0.93);transform-origin:0 0">0.25 / 3.99 / 0.049</div>
<div style="position:absolute;left:18px;top:106px;height:21px;line-height:21px;white-space:nowrap;">2 [Hz,s,m/s^2]</div>
<div style="position:absolute;left:166px;top:106px;height:21px;line-height:21px;white-space:nowrap;color:#6d6d6d;transform:scaleX(0.93);transform-origin:0 0">0.25 / 3.98 / 0.049</div>
<div style="position:absolute;left:18px;top:127px;height:21px;line-height:21px;white-space:nowrap;">3 [Hz,s,m/s^2]</div>
<div style="position:absolute;left:166px;top:127px;height:21px;line-height:21px;white-space:nowrap;color:#6d6d6d;transform:scaleX(0.93);transform-origin:0 0">0.25 / 3.97 / 0.050</div>
<div style="position:absolute;left:18px;top:148px;height:21px;line-height:21px;white-space:nowrap;">4 [Hz,s,m/s^2]</div>
<div style="position:absolute;left:166px;top:148px;height:21px;line-height:21px;white-space:nowrap;color:#6d6d6d;transform:scaleX(0.93);transform-origin:0 0">0.25 / 3.96 / 0.050</div>
<div style="position:absolute;left:18px;top:169px;height:21px;line-height:21px;white-space:nowrap;">5 [Hz,s,m/s^2]</div>
<div style="position:absolute;left:166px;top:169px;height:21px;line-height:21px;white-space:nowrap;color:#6d6d6d;transform:scaleX(0.93);transform-origin:0 0">0.25 / 3.95 / 0.050</div>
<div style="position:absolute;left:18px;top:190px;height:21px;line-height:21px;white-space:nowrap;">6 [Hz,s,m/s^2]</div>
<div style="position:absolute;left:166px;top:190px;height:21px;line-height:21px;white-space:nowrap;color:#6d6d6d;transform:scaleX(0.93);transform-origin:0 0">0.25 / 3.94 / 0.050</div>
<div style="position:absolute;left:18px;top:211px;height:21px;line-height:21px;white-space:nowrap;">7 [Hz,s,m/s^2]</div>
<div style="position:absolute;left:166px;top:211px;height:21px;line-height:21px;white-space:nowrap;color:#6d6d6d;transform:scaleX(0.93);transform-origin:0 0">0.25 / 3.93 / 0.051</div>
<div style="position:absolute;left:18px;top:232px;height:21px;line-height:21px;white-space:nowrap;">8 [Hz,s,m/s^2]</div>
<div style="position:absolute;left:166px;top:232px;height:21px;line-height:21px;white-space:nowrap;color:#6d6d6d;transform:scaleX(0.93);transform-origin:0 0">0.25 / 3.92 / 0.051</div>
<div style="position:absolute;left:18px;top:253px;height:21px;line-height:21px;white-space:nowrap;">9 [Hz,s,m/s^2]</div>
<div style="position:absolute;left:166px;top:253px;height:21px;line-height:21px;white-space:nowrap;color:#6d6d6d;transform:scaleX(0.93);transform-origin:0 0">0.26 / 3.91 / 0.051</div>
<div style="position:absolute;left:18px;top:274px;height:21px;line-height:21px;white-space:nowrap;">10 [Hz,s,m/s^2]</div>
<div style="position:absolute;left:166px;top:274px;height:21px;line-height:21px;white-space:nowrap;color:#6d6d6d;transform:scaleX(0.93);transform-origin:0 0">0.26 / 3.90 / 0.052</div>
</div>
<div style="position:absolute;left:629px;top:194px;width:17px;height:280px;background:#f0f0f0"></div>
<div style="position:absolute;left:630px;top:211px;width:15px;height:17px;background:#cdcdcd"></div>
<svg style="left:633px;top:200px" width="9" height="7"><path d="M1 5.5 L4.5 2 L8 5.5" fill="none" stroke="#555" stroke-width="2"/></svg>
<svg style="left:633px;top:462px" width="9" height="7"><path d="M1 1.5 L4.5 5 L8 1.5" fill="none" stroke="#555" stroke-width="2"/></svg>
<div style="position:absolute;left:316px;top:475px;width:999px;height:29px;background:linear-gradient(#cfdff3 0px,#cfdff3 1px,#e4eefd 1px,#cde0fb 12px,#a8ccfa 12px,#b9d7fd 100%)"></div>
<div style="position:absolute;left:319px;top:479px;width:50px;height:23px;border-radius:3px;border:1px solid #7e9bc8;background:linear-gradient(#edf3fc 0%,#e6eefb 50%,#d5e2f3 52%,#e3ecf9 100%);"></div>
<div style="position:absolute;left:319px;top:480px;width:50px;height:23px;line-height:23px;text-align:center;color:#20408e;"><span style="display:inline-block;transform:scaleX(0.84)">New</span></div>
<div style="position:absolute;left:370px;top:479px;width:50px;height:23px;border-radius:3px;border:1px solid #7e9bc8;background:linear-gradient(#edf3fc 0%,#e6eefb 50%,#d5e2f3 52%,#e3ecf9 100%);"></div>
<div style="position:absolute;left:370px;top:480px;width:50px;height:23px;line-height:23px;text-align:center;color:#20408e;"><span style="display:inline-block;transform:scaleX(0.84)">Insert</span></div>
<div style="position:absolute;left:421px;top:479px;width:50px;height:23px;border-radius:3px;border:1px solid #7e9bc8;background:linear-gradient(#edf3fc 0%,#e6eefb 50%,#d5e2f3 52%,#e3ecf9 100%);"></div>
<div style="position:absolute;left:421px;top:480px;width:50px;height:23px;line-height:23px;text-align:center;color:#20408e;"><span style="display:inline-block;transform:scaleX(0.84)">Edit</span></div>
<div style="position:absolute;left:472px;top:479px;width:53px;height:23px;border-radius:3px;border:1px solid #c8c8c8;background:linear-gradient(#efefef 0%,#e8e8e8 50%,#d9d9d9 52%,#e6e6e6 100%);"></div>
<div style="position:absolute;left:472px;top:480px;width:53px;height:23px;line-height:23px;text-align:center;color:#9a9a9a;"><span style="display:inline-block;transform:scaleX(0.84)">Delete</span></div>
<div style="position:absolute;left:1262px;top:479px;width:50px;height:23px;border-radius:3px;border:1px solid #7e9bc8;background:linear-gradient(#edf3fc 0%,#e6eefb 50%,#d5e2f3 52%,#e3ecf9 100%);"></div>
<div style="position:absolute;left:1262px;top:480px;width:50px;height:23px;line-height:23px;text-align:center;color:#20408e;"><span style="display:inline-block;transform:scaleX(0.84)">Close</span></div>
<div style="position:absolute;left:305px;top:0px;width:1038px;height:1px;background:#f5f5f5"></div>
<div style="position:absolute;left:1342px;top:0px;width:1px;height:524px;background:#f5f5f5"></div>
<svg style="left:0;top:0" width="1343" height="524" shape-rendering="crispEdges"><path d="M734 395V262H735V254H736V247H737V240H738V232H739V225H740V217H741V210H742V203H743V195H744V188H745V180H746V173H747V165H748V158H749V154H750V154H751V154H752V154H753V154H754V154H755V154H756V154H757V154H758V154H759V154H760V154H761V154H762V154H763V154H764V154H765V154H766V154H767V154H768V154H769V154H770V154H771V154H772V154H773V154H774V154H775V154H776V154H777V154H778V154H779V154H780V154H781V154H782V154H783V154H784V154H785V154H786V154H787V154H788V154H789V154H790V154H791V154H792V154H793V154H794V154H795V154H796V154H797V154H798V154H799V154H800V154H801V154H802V154H803V154H804V154H805V154H806V154H807V154H808V154H809V154H810V154H811V154H812V154H813V154H814V154H815V154H816V154H817V154H818V154H819V154H820V154H821V154H822V154H823V154H824V154H825V154H826V154H827V156H828V158H829V161H830V163H831V165H832V167H833V170H834V172H835V174H836V176H837V178H838V180H839V182H840V184H841V186H842V188H843V189H844V191H845V193H846V195H847V196H848V198H849V200H850V201H851V203H852V205H853V206H854V208H855V209H856V211H857V212H858V214H859V215H860V216H861V218H862V219H863V220H864V222H865V223H866V224H867V225H868V227H869V228H870V229H871V230H872V231H873V233H874V234H875V235H876V236H877V237H878V238H879V239H880V240H881V241H882V242H883V243H884V244H885V245H886V246H887V247H888V248H889V249H890V250H891V251H892V252H893V252H894V253H895V254H896V255H897V256H898V257H899V257H900V258H901V259H902V260H903V261H904V261H905V262H906V263H907V264H908V264H909V265H910V266H911V267H912V267H913V268H914V269H915V269H916V270H917V271H918V271H919V272H920V273H921V273H922V274H923V274H924V275H925V276H926V276H927V277H928V277H929V278H930V279H931V279H932V280H933V280H934V281H935V281H936V282H937V283H938V283H939V284H940V284H941V285H942V285H943V286H944V286H945V287H946V287H947V288H948V288H949V289H950V289H951V290H952V290H953V291H954V291H955V291H956V292H957V292H958V293H959V293H960V294H961V294H962V295H963V295H964V295H965V296H966V296H967V297H968V297H969V297H970V298H971V298H972V299H973V299H974V299H975V300H976V300H977V301H978V301H979V301H980V302H981V302H982V302H983V303H984V303H985V304H986V304H987V304H988V305H989V305H990V305H991V306H992V306H993V306H994V307H995V307H996V307H997V308H998V308H999V308H1000V309H1001V309H1002V309H1003V310H1004V310H1005V310H1006V310H1007V311H1008V311H1009V311H1010V312H1011V312H1012V312H1013V313H1014V313H1015V313H1016V313H1017V314H1018V314H1019V314H1020V315H1021V315H1022V315H1023V315H1024V316H1025V316H1026V316H1027V316H1028V317H1029V317H1030V317H1031V317H1032V318H1033V318H1034V318H1035V318H1036V319H1037V319H1038V319H1039V319H1040V320H1041V320H1042V320H1043V320H1044V321H1045V321H1046V321H1047V321H1048V322H1049V322H1050V322H1051V322H1052V323H1053V323H1054V323H1055V323H1056V323H1057V324H1058V324H1059V324H1060V324H1061V324H1062V325H1063V325H1064V325H1065V325H1066V326H1067V326H1068V326H1069V326H1070V326H1071V327H1072V327H1073V327H1074V327H1075V327H1076V328H1077V328H1078V328H1079V328H1080V328H1081V328H1082V329H1083V329H1084V329H1085V329H1086V329H1087V330H1088V330H1089V330H1090V330H1091V330H1092V330H1093V331H1094V331H1095V331H1096V331H1097V331H1098V332H1099V332H1100V332H1101V332H1102V332H1103V332H1104V333H1105V333H1106V333H1107V333H1108V333H1109V333H1110V334H1111V334H1112V334H1113V334H1114V334H1115V334H1116V334H1117V335H1118V335H1119V335H1120V336H1121V336H1122V336H1123V337H1124V337H1125V337H1126V337H1127V338H1128V338H1129V338H1130V339H1131V339H1132V339H1133V339H1134V340H1135V340H1136V340H1137V341H1138V341H1139V341H1140V341H1141V342H1142V342H1143V342H1144V342H1145V343H1146V343H1147V343H1148V343H1149V344H1150V344H1151V344H1152V344H1153V345H1154V345H1155V345H1156V345H1157V345H1158V346H1159V346H1160V346H1161V346H1162V347H1163V347H1164V347H1165V347H1166V347H1167V348H1168V348H1169V348H1170V348H1171V349H1172V349H1173V349H1174V349H1175V349H1176V350H1177V350H1178V350H1179V350H1180V350H1181V351H1182V351H1183V351H1184V351H1185V351H1186V352H1187V352H1188V352H1189V352H1190V352H1191V352H1192V353H1193V353H1194V353H1195V353H1196V353H1197V354H1198V354H1199V354H1200V354H1201V354H1202V354H1203V355H1204V355H1205V355H1206V355H1207V355H1208V355H1209V356H1210V356H1211V356H1212V356H1213V356H1214V356H1215V357H1216V357H1217V357H1218V357H1219V357H1220V357H1221V358H1222V358H1223V358H1224V358H1225V358H1226V358H1227V358H1228V359H1229V359H1230V359H1231V359H1232V359H1233V359H1234V359H1235V360H1236V360H1237V360H1238V360H1239V360H1240V360H1241V360H1242V361H1243V361H1244V361H1245V361H1246V395Z" fill="#666666"/>
<path d="M742 210h1V395h-1zM746 181h1V395h-1zM751 155h1V395h-1zM755 155h1V395h-1zM759 155h1V395h-1zM764 155h1V395h-1zM768 155h1V395h-1zM773 155h1V395h-1zM781 155h1V395h-1zM786 155h1V395h-1zM790 155h1V395h-1zM795 155h1V395h-1zM799 155h1V395h-1zM803 155h1V395h-1zM808 155h1V395h-1zM812 155h1V395h-1zM821 155h1V395h-1zM830 166h1V395h-1zM834 175h1V395h-1zM838 183h1V395h-1zM843 192h1V395h-1zM847 199h1V395h-1zM852 207h1V395h-1zM856 213h1V395h-1zM860 218h1V395h-1zM869 229h1V395h-1zM874 235h1V395h-1zM878 239h1V395h-1zM882 243h1V395h-1zM887 248h1V395h-1zM891 252h1V395h-1zM896 256h1V395h-1zM900 259h1V395h-1zM904 262h1V395h-1zM909 266h1V395h-1zM918 272h1V395h-1zM922 275h1V395h-1zM926 277h1V395h-1zM931 280h1V395h-1zM935 282h1V395h-1zM940 285h1V395h-1zM944 287h1V395h-1zM948 289h1V395h-1zM957 293h1V395h-1zM966 297h1V395h-1zM970 299h1V395h-1zM975 301h1V395h-1zM979 302h1V395h-1zM983 304h1V395h-1zM987 305h1V395h-1zM991 307h1V395h-1zM996 308h1V395h-1zM1000 310h1V395h-1zM1004 311h1V395h-1zM1013 314h1V395h-1zM1018 315h1V395h-1zM1022 316h1V395h-1zM1026 317h1V395h-1zM1031 318h1V395h-1zM1035 319h1V395h-1zM1040 321h1V395h-1zM1044 322h1V395h-1zM1048 323h1V395h-1zM1053 324h1V395h-1zM1061 325h1V395h-1zM1066 327h1V395h-1zM1070 327h1V395h-1zM1075 328h1V395h-1zM1079 329h1V395h-1zM1083 330h1V395h-1zM1088 331h1V395h-1zM1092 331h1V395h-1zM1101 333h1V395h-1zM1110 335h1V395h-1zM1114 335h1V395h-1zM1119 336h1V395h-1zM1123 338h1V395h-1zM1127 339h1V395h-1zM1132 340h1V395h-1zM1136 341h1V395h-1zM1141 343h1V395h-1zM1149 345h1V395h-1zM1154 346h1V395h-1zM1158 347h1V395h-1zM1163 348h1V395h-1zM1167 349h1V395h-1zM1171 350h1V395h-1zM1176 351h1V395h-1zM1180 351h1V395h-1zM1184 352h1V395h-1zM1189 353h1V395h-1zM1198 355h1V395h-1zM1202 355h1V395h-1zM1206 356h1V395h-1zM1211 357h1V395h-1zM1215 358h1V395h-1zM1220 358h1V395h-1zM1224 359h1V395h-1zM1228 360h1V395h-1zM1237 361h1V395h-1zM1242 362h1V395h-1z" fill="#ffffff"/>
<path d="M737 240h1V395h-1zM777 154h1V395h-1zM817 154h1V395h-1zM825 154h1V395h-1zM865 223h1V395h-1zM913 268h1V395h-1zM953 291h1V395h-1zM961 294h1V395h-1zM1009 311h1V395h-1zM1057 324h1V395h-1zM1097 331h1V395h-1zM1105 333h1V395h-1zM1145 343h1V395h-1zM1193 353h1V395h-1zM1233 359h1V395h-1z" fill="#0000ff"/>
<path d="M730 292h1V296h-1zM731 284h1V292h-1zM732 277h1V285h-1zM733 269h1V277h-1zM734 262h1V270h-1zM735 254h1V262h-1zM736 247h1V255h-1zM737 240h1V247h-1zM738 232h1V240h-1zM739 225h1V233h-1zM740 217h1V225h-1zM741 210h1V218h-1zM742 203h1V210h-1zM743 195h1V203h-1zM744 188h1V196h-1zM745 180h1V188h-1zM746 173h1V181h-1zM747 165h1V173h-1zM748 158h1V166h-1zM749 154h1V158h-1zM750 154h1V155h-1zM751 154h1V155h-1zM752 154h1V155h-1zM753 154h1V155h-1zM754 154h1V155h-1zM755 154h1V155h-1zM756 154h1V155h-1zM757 154h1V155h-1zM758 154h1V155h-1zM759 154h1V155h-1zM760 154h1V155h-1zM761 154h1V155h-1zM762 154h1V155h-1zM763 154h1V155h-1zM764 154h1V155h-1zM765 154h1V155h-1zM766 154h1V155h-1zM767 154h1V155h-1zM768 154h1V155h-1zM769 154h1V155h-1zM770 154h1V155h-1zM771 154h1V155h-1zM772 154h1V155h-1zM773 154h1V155h-1zM774 154h1V155h-1zM775 154h1V155h-1zM776 154h1V155h-1zM777 154h1V155h-1zM778 154h1V155h-1zM779 154h1V155h-1zM780 154h1V155h-1zM781 154h1V155h-1zM782 154h1V155h-1zM783 154h1V155h-1zM784 154h1V155h-1zM785 154h1V155h-1zM786 154h1V155h-1zM787 154h1V155h-1zM788 154h1V155h-1zM789 154h1V155h-1zM790 154h1V155h-1zM791 154h1V155h-1zM792 154h1V155h-1zM793 154h1V155h-1zM794 154h1V155h-1zM795 154h1V155h-1zM796 154h1V155h-1zM797 154h1V155h-1zM798 154h1V155h-1zM799 154h1V155h-1zM800 154h1V155h-1zM801 154h1V155h-1zM802 154h1V155h-1zM803 154h1V155h-1zM804 154h1V155h-1zM805 154h1V155h-1zM806 154h1V155h-1zM807 154h1V155h-1zM808 154h1V155h-1zM809 154h1V155h-1zM810 154h1V155h-1zM811 154h1V155h-1zM812 154h1V155h-1zM813 154h1V155h-1zM814 154h1V155h-1zM815 154h1V155h-1zM816 154h1V155h-1zM817 154h1V155h-1zM818 154h1V155h-1zM819 154h1V155h-1zM820 154h1V155h-1zM821 154h1V155h-1zM822 154h1V155h-1zM823 154h1V155h-1zM824 154h1V155h-1zM825 154h1V155h-1zM826 154h1V156h-1zM827 156h1V159h-1zM828 158h1V161h-1zM829 161h1V164h-1zM830 163h1V166h-1zM831 165h1V168h-1zM832 167h1V170h-1zM833 170h1V173h-1zM834 172h1V175h-1zM835 174h1V177h-1zM836 176h1V179h-1zM837 178h1V181h-1zM838 180h1V183h-1zM839 182h1V185h-1zM840 184h1V187h-1zM841 186h1V188h-1zM842 188h1V190h-1zM843 189h1V192h-1zM844 191h1V194h-1zM845 193h1V195h-1zM846 195h1V197h-1zM847 196h1V199h-1zM848 198h1V200h-1zM849 200h1V202h-1zM850 201h1V204h-1zM851 203h1V205h-1zM852 205h1V207h-1zM853 206h1V208h-1zM854 208h1V210h-1zM855 209h1V211h-1zM856 211h1V213h-1zM857 212h1V214h-1zM858 214h1V215h-1zM859 215h1V217h-1zM860 216h1V218h-1zM861 218h1V219h-1zM862 219h1V221h-1zM863 220h1V222h-1zM864 222h1V223h-1zM865 223h1V224h-1zM866 224h1V226h-1zM867 225h1V227h-1zM868 227h1V228h-1zM869 228h1V229h-1zM870 229h1V230h-1zM871 230h1V232h-1zM872 231h1V233h-1zM873 233h1V234h-1zM874 234h1V235h-1zM875 235h1V236h-1zM876 236h1V237h-1zM877 237h1V238h-1zM878 238h1V239h-1zM879 239h1V240h-1zM880 240h1V241h-1zM881 241h1V242h-1zM882 242h1V243h-1zM883 243h1V244h-1zM884 244h1V245h-1zM885 245h1V246h-1zM886 246h1V247h-1zM887 247h1V248h-1zM888 248h1V249h-1zM889 249h1V250h-1zM890 250h1V251h-1zM891 251h1V252h-1zM892 252h1V253h-1zM893 252h1V253h-1zM894 253h1V254h-1zM895 254h1V255h-1zM896 255h1V256h-1zM897 256h1V257h-1zM898 257h1V258h-1zM899 257h1V258h-1zM900 258h1V259h-1zM901 259h1V260h-1zM902 260h1V261h-1zM903 261h1V262h-1zM904 261h1V262h-1zM905 262h1V263h-1zM906 263h1V264h-1zM907 264h1V265h-1zM908 264h1V265h-1zM909 265h1V266h-1zM910 266h1V267h-1zM911 267h1V268h-1zM912 267h1V268h-1zM913 268h1V269h-1zM914 269h1V270h-1zM915 269h1V270h-1zM916 270h1V271h-1zM917 271h1V272h-1zM918 271h1V272h-1zM919 272h1V273h-1zM920 273h1V274h-1zM921 273h1V274h-1zM922 274h1V275h-1zM923 274h1V275h-1zM924 275h1V276h-1zM925 276h1V277h-1zM926 276h1V277h-1zM927 277h1V278h-1zM928 277h1V278h-1zM929 278h1V279h-1zM930 279h1V280h-1zM931 279h1V280h-1zM932 280h1V281h-1zM933 280h1V281h-1zM934 281h1V282h-1zM935 281h1V282h-1zM936 282h1V283h-1zM937 283h1V284h-1zM938 283h1V284h-1zM939 284h1V285h-1zM940 284h1V285h-1zM941 285h1V286h-1zM942 285h1V286h-1zM943 286h1V287h-1zM944 286h1V287h-1zM945 287h1V288h-1zM946 287h1V288h-1zM947 288h1V289h-1zM948 288h1V289h-1zM949 289h1V290h-1zM950 289h1V290h-1zM951 290h1V291h-1zM952 290h1V291h-1zM953 291h1V292h-1zM954 291h1V292h-1zM955 291h1V292h-1zM956 292h1V293h-1zM957 292h1V293h-1zM958 293h1V294h-1zM959 293h1V294h-1zM960 294h1V295h-1zM961 294h1V295h-1zM962 295h1V296h-1zM963 295h1V296h-1zM964 295h1V296h-1zM965 296h1V297h-1zM966 296h1V297h-1zM967 297h1V298h-1zM968 297h1V298h-1zM969 297h1V298h-1zM970 298h1V299h-1zM971 298h1V299h-1zM972 299h1V300h-1zM973 299h1V300h-1zM974 299h1V300h-1zM975 300h1V301h-1zM976 300h1V301h-1zM977 301h1V302h-1zM978 301h1V302h-1zM979 301h1V302h-1zM980 302h1V303h-1zM981 302h1V303h-1zM982 302h1V303h-1zM983 303h1V304h-1zM984 303h1V304h-1zM985 304h1V305h-1zM986 304h1V305h-1zM987 304h1V305h-1zM988 305h1V306h-1zM989 305h1V306h-1zM990 305h1V306h-1zM991 306h1V307h-1zM992 306h1V307h-1zM993 306h1V307h-1zM994 307h1V308h-1zM995 307h1V308h-1zM996 307h1V308h-1zM997 308h1V309h-1zM998 308h1V309h-1zM999 308h1V309h-1zM1000 309h1V310h-1zM1001 309h1V310h-1zM1002 309h1V310h-1zM1003 310h1V311h-1zM1004 310h1V311h-1zM1005 310h1V311h-1zM1006 310h1V311h-1zM1007 311h1V312h-1zM1008 311h1V312h-1zM1009 311h1V312h-1zM1010 312h1V313h-1zM1011 312h1V313h-1zM1012 312h1V313h-1zM1013 313h1V314h-1zM1014 313h1V314h-1zM1015 313h1V314h-1zM1016 313h1V314h-1zM1017 314h1V315h-1zM1018 314h1V315h-1zM1019 314h1V315h-1zM1020 315h1V316h-1zM1021 315h1V316h-1zM1022 315h1V316h-1zM1023 315h1V316h-1zM1024 316h1V317h-1zM1025 316h1V317h-1zM1026 316h1V317h-1zM1027 316h1V317h-1zM1028 317h1V318h-1zM1029 317h1V318h-1zM1030 317h1V318h-1zM1031 317h1V318h-1zM1032 318h1V319h-1zM1033 318h1V319h-1zM1034 318h1V319h-1zM1035 318h1V319h-1zM1036 319h1V320h-1zM1037 319h1V320h-1zM1038 319h1V320h-1zM1039 319h1V320h-1zM1040 320h1V321h-1zM1041 320h1V321h-1zM1042 320h1V321h-1zM1043 320h1V321h-1zM1044 321h1V322h-1zM1045 321h1V322h-1zM1046 321h1V322h-1zM1047 321h1V322h-1zM1048 322h1V323h-1zM1049 322h1V323h-1zM1050 322h1V323h-1zM1051 322h1V323h-1zM1052 323h1V324h-1zM1053 323h1V324h-1zM1054 323h1V324h-1zM1055 323h1V324h-1zM1056 323h1V324h-1zM1057 324h1V325h-1zM1058 324h1V325h-1zM1059 324h1V325h-1zM1060 324h1V325h-1zM1061 324h1V325h-1zM1062 325h1V326h-1zM1063 325h1V326h-1zM1064 325h1V326h-1zM1065 325h1V326h-1zM1066 326h1V327h-1zM1067 326h1V327h-1zM1068 326h1V327h-1zM1069 326h1V327h-1zM1070 326h1V327h-1zM1071 327h1V328h-1zM1072 327h1V328h-1zM1073 327h1V328h-1zM1074 327h1V328h-1zM1075 327h1V328h-1zM1076 328h1V329h-1zM1077 328h1V329h-1zM1078 328h1V329h-1zM1079 328h1V329h-1zM1080 328h1V329h-1zM1081 328h1V329h-1zM1082 329h1V330h-1zM1083 329h1V330h-1zM1084 329h1V330h-1zM1085 329h1V330h-1zM1086 329h1V330h-1zM1087 330h1V331h-1zM1088 330h1V331h-1zM1089 330h1V331h-1zM1090 330h1V331h-1zM1091 330h1V331h-1zM1092 330h1V331h-1zM1093 331h1V332h-1zM1094 331h1V332h-1zM1095 331h1V332h-1zM1096 331h1V332h-1zM1097 331h1V332h-1zM1098 332h1V333h-1zM1099 332h1V333h-1zM1100 332h1V333h-1zM1101 332h1V333h-1zM1102 332h1V333h-1zM1103 332h1V333h-1zM1104 333h1V334h-1zM1105 333h1V334h-1zM1106 333h1V334h-1zM1107 333h1V334h-1zM1108 333h1V334h-1zM1109 333h1V334h-1zM1110 334h1V335h-1zM1111 334h1V335h-1zM1112 334h1V335h-1zM1113 334h1V335h-1zM1114 334h1V335h-1zM1115 334h1V335h-1zM1116 334h1V335h-1zM1117 335h1V336h-1zM1118 335h1V336h-1zM1119 335h1V336h-1zM1120 336h1V337h-1zM1121 336h1V337h-1zM1122 336h1V337h-1zM1123 337h1V338h-1zM1124 337h1V338h-1zM1125 337h1V338h-1zM1126 337h1V338h-1zM1127 338h1V339h-1zM1128 338h1V339h-1zM1129 338h1V339h-1zM1130 339h1V340h-1zM1131 339h1V340h-1zM1132 339h1V340h-1zM1133 339h1V340h-1zM1134 340h1V341h-1zM1135 340h1V341h-1zM1136 340h1V341h-1zM1137 341h1V342h-1zM1138 341h1V342h-1zM1139 341h1V342h-1zM1140 341h1V342h-1zM1141 342h1V343h-1zM1142 342h1V343h-1zM1143 342h1V343h-1zM1144 342h1V343h-1zM1145 343h1V344h-1zM1146 343h1V344h-1zM1147 343h1V344h-1zM1148 343h1V344h-1zM1149 344h1V345h-1zM1150 344h1V345h-1zM1151 344h1V345h-1zM1152 344h1V345h-1zM1153 345h1V346h-1zM1154 345h1V346h-1zM1155 345h1V346h-1zM1156 345h1V346h-1zM1157 345h1V346h-1zM1158 346h1V347h-1zM1159 346h1V347h-1zM1160 346h1V347h-1zM1161 346h1V347h-1zM1162 347h1V348h-1zM1163 347h1V348h-1zM1164 347h1V348h-1zM1165 347h1V348h-1zM1166 347h1V348h-1zM1167 348h1V349h-1zM1168 348h1V349h-1zM1169 348h1V349h-1zM1170 348h1V349h-1zM1171 349h1V350h-1zM1172 349h1V350h-1zM1173 349h1V350h-1zM1174 349h1V350h-1zM1175 349h1V350h-1zM1176 350h1V351h-1zM1177 350h1V351h-1zM1178 350h1V351h-1zM1179 350h1V351h-1zM1180 350h1V351h-1zM1181 351h1V352h-1zM1182 351h1V352h-1zM1183 351h1V352h-1zM1184 351h1V352h-1zM1185 351h1V352h-1zM1186 352h1V353h-1zM1187 352h1V353h-1zM1188 352h1V353h-1zM1189 352h1V353h-1zM1190 352h1V353h-1zM1191 352h1V353h-1zM1192 353h1V354h-1zM1193 353h1V354h-1zM1194 353h1V354h-1zM1195 353h1V354h-1zM1196 353h1V354h-1zM1197 354h1V355h-1zM1198 354h1V355h-1zM1199 354h1V355h-1zM1200 354h1V355h-1zM1201 354h1V355h-1zM1202 354h1V355h-1zM1203 355h1V356h-1zM1204 355h1V356h-1zM1205 355h1V356h-1zM1206 355h1V356h-1zM1207 355h1V356h-1zM1208 355h1V356h-1zM1209 356h1V357h-1zM1210 356h1V357h-1zM1211 356h1V357h-1zM1212 356h1V357h-1zM1213 356h1V357h-1zM1214 356h1V357h-1zM1215 357h1V358h-1zM1216 357h1V358h-1zM1217 357h1V358h-1zM1218 357h1V358h-1zM1219 357h1V358h-1zM1220 357h1V358h-1zM1221 358h1V359h-1zM1222 358h1V359h-1zM1223 358h1V359h-1zM1224 358h1V359h-1zM1225 358h1V359h-1zM1226 358h1V359h-1zM1227 358h1V359h-1zM1228 359h1V360h-1zM1229 359h1V360h-1zM1230 359h1V360h-1zM1231 359h1V360h-1zM1232 359h1V360h-1zM1233 359h1V360h-1zM1234 359h1V360h-1zM1235 360h1V361h-1zM1236 360h1V361h-1zM1237 360h1V361h-1zM1238 360h1V361h-1zM1239 360h1V361h-1zM1240 360h1V361h-1zM1241 360h1V361h-1zM1242 361h1V362h-1zM1243 361h1V362h-1zM1244 361h1V362h-1zM1245 361h1V362h-1z" fill="#0000ff"/>
<path d="M729 153h1V396h-1zM729 395H1246v1H729z" fill="#000"/>
<path d="M713 153h1V396h-1zM710 395h3v1h-3zM710 361h3v1h-3zM710 326h3v1h-3zM710 291h3v1h-3zM710 257h3v1h-3zM710 223h3v1h-3zM710 188h3v1h-3zM710 153h3v1h-3z" fill="#000"/>
<path d="M729 405H1247v1H729zM729 405h1v4h-1zM794 405h1v4h-1zM858 405h1v4h-1zM923 405h1v4h-1zM988 405h1v4h-1zM1052 405h1v4h-1zM1117 405h1v4h-1zM1181 405h1v4h-1zM1246 405h1v4h-1z" fill="#000"/></svg>
<div style="position:absolute;left:640px;width:68px;text-align:right;top:384px;height:12px;line-height:12px;font-family:'Liberation Serif',serif;font-size:11.5px;color:#000">0.00</div>
<div style="position:absolute;left:640px;width:68px;text-align:right;top:350px;height:12px;line-height:12px;font-family:'Liberation Serif',serif;font-size:11.5px;color:#000">0.05</div>
<div style="position:absolute;left:640px;width:68px;text-align:right;top:315px;height:12px;line-height:12px;font-family:'Liberation Serif',serif;font-size:11.5px;color:#000">0.10</div>
<div style="position:absolute;left:640px;width:68px;text-align:right;top:280px;height:12px;line-height:12px;font-family:'Liberation Serif',serif;font-size:11.5px;color:#000">0.15</div>
<div style="position:absolute;left:640px;width:68px;text-align:right;top:246px;height:12px;line-height:12px;font-family:'Liberation Serif',serif;font-size:11.5px;color:#000">0.20</div>
<div style="position:absolute;left:640px;width:68px;text-align:right;top:212px;height:12px;line-height:12px;font-family:'Liberation Serif',serif;font-size:11.5px;color:#000">0.25</div>
<div style="position:absolute;left:640px;width:68px;text-align:right;top:177px;height:12px;line-height:12px;font-family:'Liberation Serif',serif;font-size:11.5px;color:#000">0.30</div>
<div style="position:absolute;left:640px;width:68px;text-align:right;top:142px;height:12px;line-height:12px;font-family:'Liberation Serif',serif;font-size:11.5px;color:#000">0.35</div>
<div style="position:absolute;left:719px;top:409px;width:0;height:0"><div style="position:absolute;right:0;top:0;transform-origin:100% 0;transform:rotate(-90deg);white-space:nowrap;font-family:'Liberation Serif',serif;font-size:11.5px;line-height:10px;height:10px;text-align:right;width:40px;">0.0</div></div>
<div style="position:absolute;left:784px;top:409px;width:0;height:0"><div style="position:absolute;right:0;top:0;transform-origin:100% 0;transform:rotate(-90deg);white-space:nowrap;font-family:'Liberation Serif',serif;font-size:11.5px;line-height:10px;height:10px;text-align:right;width:40px;">0.5</div></div>
<div style="position:absolute;left:848px;top:409px;width:0;height:0"><div style="position:absolute;right:0;top:0;transform-origin:100% 0;transform:rotate(-90deg);white-space:nowrap;font-family:'Liberation Serif',serif;font-size:11.5px;line-height:10px;height:10px;text-align:right;width:40px;">1.0</div></div>
<div style="position:absolute;left:913px;top:409px;width:0;height:0"><div style="position:absolute;right:0;top:0;transform-origin:100% 0;transform:rotate(-90deg);white-space:nowrap;font-family:'Liberation Serif',serif;font-size:11.5px;line-height:10px;height:10px;text-align:right;width:40px;">1.5</div></div>
<div style="position:absolute;left:978px;top:409px;width:0;height:0"><div style="position:absolute;right:0;top:0;transform-origin:100% 0;transform:rotate(-90deg);white-space:nowrap;font-family:'Liberation Serif',serif;font-size:11.5px;line-height:10px;height:10px;text-align:right;width:40px;">2.0</div></div>
<div style="position:absolute;left:1042px;top:409px;width:0;height:0"><div style="position:absolute;right:0;top:0;transform-origin:100% 0;transform:rotate(-90deg);white-space:nowrap;font-family:'Liberation Serif',serif;font-size:11.5px;line-height:10px;height:10px;text-align:right;width:40px;">2.5</div></div>
<div style="position:absolute;left:1107px;top:409px;width:0;height:0"><div style="position:absolute;right:0;top:0;transform-origin:100% 0;transform:rotate(-90deg);white-space:nowrap;font-family:'Liberation Serif',serif;font-size:11.5px;line-height:10px;height:10px;text-align:right;width:40px;">3.0</div></div>
<div style="position:absolute;left:1171px;top:409px;width:0;height:0"><div style="position:absolute;right:0;top:0;transform-origin:100% 0;transform:rotate(-90deg);white-space:nowrap;font-family:'Liberation Serif',serif;font-size:11.5px;line-height:10px;height:10px;text-align:right;width:40px;">3.5</div></div>
<div style="position:absolute;left:1236px;top:409px;width:0;height:0"><div style="position:absolute;right:0;top:0;transform-origin:100% 0;transform:rotate(-90deg);white-space:nowrap;font-family:'Liberation Serif',serif;font-size:11.5px;line-height:10px;height:10px;text-align:right;width:40px;">4.0</div></div>
<div style="position:absolute;left:728px;top:133px;line-height:12px;font-family:'Liberation Serif',serif;font-size:11px">m/s^2</div>
<div style="position:absolute;left:748px;top:140px;line-height:12px;font-family:'Liberation Serif',serif;font-size:11.5px">0.3488</div>
<div style="position:absolute;left:1245px;top:362px;line-height:12px;font-family:'Liberation Serif',serif;font-size:11.5px">0.0492</div>
<div style="position:absolute;left:1242px;top:376px;line-height:10px;font-family:'Liberation Sans',sans-serif;font-size:8px;color:#000">s</div>
</body></html>
